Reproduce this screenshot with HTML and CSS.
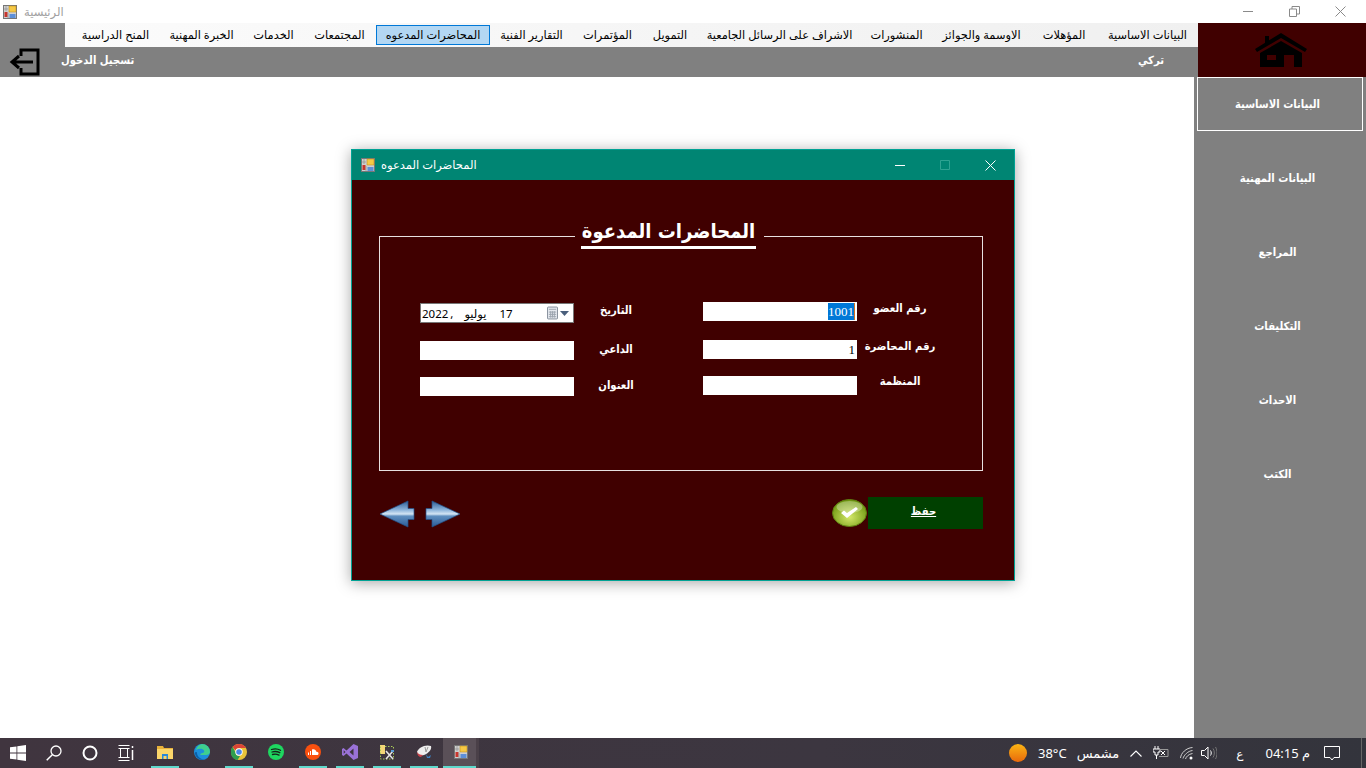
FILE: index.html
```html
<!DOCTYPE html>
<html lang="ar">
<head>
    <meta charset="UTF-8">
    <title>الرئيسية</title>
    <link rel="stylesheet" href="styles.css">
</head>
<body>
    <div class="titlebar">
        <svg class="app-icon" viewBox="0 0 14 14"><use href="#mdi-icon"/></svg>
        <span class="titlebar-text" dir="rtl">الرئيسية</span>
        <div class="window-controls">
            <svg width="11" height="11" viewBox="0 0 11 11"><path d="M0 5.500h10" stroke="#8a8a8a" fill="none"/></svg>
            <svg width="11" height="11" viewBox="0 0 11 11"><path d="M.5 3h7v7.500h-7zM3 3V.5h7.500V8H7.500" stroke="#8a8a8a" fill="none"/></svg>
            <svg width="11" height="11" viewBox="0 0 11 11"><path d="M.5.5l10 10M10.500.5l-10 10" stroke="#8a8a8a" fill="none"/></svg>
        </div>
    </div>

    <div class="top">
        <div class="top-left">
            <div class="menu-row">
                <nav class="menu" dir="rtl">
                    <a>البيانات الاساسية</a>
                    <a>المؤهلات</a>
                    <a>الاوسمة والجوائز</a>
                    <a>المنشورات</a>
                    <a>الاشراف على الرسائل الجامعية</a>
                    <a>التمويل</a>
                    <a>المؤتمرات</a>
                    <a>التقارير الفنية</a>
                    <a class="active">المحاضرات المدعوه</a>
                    <a>المجتمعات</a>
                    <a>الخدمات</a>
                    <a>الخبرة المهنية</a>
                    <a>المنح الدراسية</a>
                </nav>
            </div>
            <div class="band">
                <svg class="logout-icon" width="32" height="28" viewBox="0 0 32 28">
                    <path d="M12 8V2h17v24H12v-6" fill="none" stroke="#000" stroke-width="3"/>
                    <path d="M24 14H4M10 8l-7 6 7 6" fill="none" stroke="#000" stroke-width="3"/>
                </svg>
                <span class="band-text logout-text" dir="rtl">تسجيل الدخول</span>
                <span class="band-text user-text" dir="rtl">تركي</span>
            </div>
        </div>
        <div class="home">
            <svg width="52" height="34" viewBox="0 0 52 34">
                <path d="M10 3h4v5l-4 3z" fill="#000"/>
                <path d="M0 16L26 0l26 16-2 3L26 5 2 19z" fill="#000"/>
                <path d="M5 20L26 8l21 12v14h-8V22H29v12H5zM12 22v5h9v-5z" fill="#000" fill-rule="evenodd"/>
            </svg>
        </div>
    </div>

    <div class="main">
        <div class="content">
            <div class="dialog">
                <div class="dialog-title">
                    <svg class="dialog-icon" viewBox="0 0 14 14"><use href="#mdi-icon"/></svg>
                    <span class="dialog-title-text" dir="rtl">المحاضرات المدعوه</span>
                    <div class="dialog-controls">
                        <svg width="11" height="11" viewBox="0 0 11 11"><path d="M0 5.500h10" stroke="#fff" fill="none"/></svg>
                        <svg width="11" height="11" viewBox="0 0 11 11"><path d="M.5.5h9v9h-9z" stroke="#2ea392" fill="none"/></svg>
                        <svg width="11" height="11" viewBox="0 0 11 11"><path d="M.5.5l10 10M10.500.5l-10 10" stroke="#fff" fill="none"/></svg>
                    </div>
                </div>
                <div class="dialog-body">
                    <div class="frame">
                        <h1 class="legend" dir="rtl"><span>المحاضرات المدعوة</span></h1>
                        <div class="form">
                            <div class="form-col form-col-left">
                                <div class="field">
                                    <div class="datepicker">
                                        <span class="date-year">2022</span>
                                        <span class="date-comma">,</span>
                                        <span class="date-month">يوليو</span>
                                        <span class="date-day">17</span>
                                        <svg class="date-cal" width="11" height="14" viewBox="0 0 12 14">
                                            <rect x=".5" y=".5" width="11" height="13" rx="1" fill="#e4e8ee" stroke="#7d8794"/>
                                            <path d="M2 3h8M2 6h8M2 8.500h8M2 11h8M4 5v7M6 5v7M8 5v7" stroke="#9aa3ad" fill="none"/>
                                        </svg>
                                        <svg class="date-drop" width="9" height="5" viewBox="0 0 9 5"><path d="M0 0h9L4.500 5z" fill="#4a5f7c"/></svg>
                                    </div>
                                    <label class="field-label label-date" dir="rtl">التاريخ</label>
                                </div>
                                <div class="field">
                                    <input class="text-input" type="text">
                                    <label class="field-label label-host" dir="rtl">الداعي</label>
                                </div>
                                <div class="field">
                                    <input class="text-input" type="text">
                                    <label class="field-label label-host" dir="rtl">العنوان</label>
                                </div>
                            </div>
                            <div class="form-col form-col-right">
                                <div class="field">
                                    <div class="text-input"><span class="selected">1001</span></div>
                                    <label class="field-label label-member" dir="rtl">رقم العضو</label>
                                </div>
                                <div class="field">
                                    <div class="text-input">1</div>
                                    <label class="field-label label-member" dir="rtl">رقم المحاضرة</label>
                                </div>
                                <div class="field">
                                    <input class="text-input" type="text">
                                    <label class="field-label label-org" dir="rtl">المنظمة</label>
                                </div>
                            </div>
                        </div>
                    </div>
                    <div class="actions">
                        <div class="nav-arrows">
                            <svg width="36" height="28" viewBox="0 0 36 28"><use href="#arrow"/></svg>
                            <svg class="flip" width="36" height="28" viewBox="0 0 36 28"><use href="#arrow"/></svg>
                        </div>
                        <div class="save">
                            <svg width="35" height="28" viewBox="0 0 35 28">
                                <ellipse cx="17.500" cy="14" rx="17" ry="13.500" fill="url(#check-bg)" stroke="#5f7f12"/>
                                <ellipse cx="17.500" cy="8" rx="13" ry="6" fill="#fff" opacity=".3"/>
                                <path d="M9 14l6 5 11-9-2-2-9 6-3-2.500z" fill="#fff"/>
                            </svg>
                            <button class="save-btn" dir="rtl">حفظ</button>
                        </div>
                    </div>
                </div>
            </div>
        </div>
        <aside class="sidebar" dir="rtl">
            <a class="side-item side-active">البيانات الاساسية</a>
            <a class="side-item">البيانات المهنية</a>
            <a class="side-item">المراجع</a>
            <a class="side-item">التكليفات</a>
            <a class="side-item">الاحداث</a>
            <a class="side-item">الكتب</a>
        </aside>
    </div>

    <footer class="taskbar">
        <div class="task-left">
            <svg class="sys-icon" width="16" height="16" viewBox="0 0 16 16"><path d="M0 2.300l6.500-.9v6.200H0zM7.300 1.300L16 0v7.600H7.300zM0 8.400h6.500v6.200L0 13.700zM7.300 8.400H16V16l-8.700-1.300z" fill="#fff"/></svg>
            <svg class="sys-icon" width="16" height="16" viewBox="0 0 16 16"><circle cx="10" cy="6" r="5" fill="none" stroke="#fff" stroke-width="1.300"/><path d="M6.300 9.700L.7 15.300" stroke="#fff" stroke-width="1.500"/></svg>
            <svg class="sys-icon" width="16" height="16" viewBox="0 0 16 16"><circle cx="8" cy="8" r="6.500" fill="none" stroke="#fff" stroke-width="2"/></svg>
            <svg class="sys-icon" width="16" height="16" viewBox="0 0 16 16"><path d="M.5 3.500h11M.5 12.500h11M2.500 3.500v9h7v-9M.5.500h11M.5 15.500h11" fill="none" stroke="#fff"/><path d="M14.500 1v2M14.500 5v10" stroke="#fff" stroke-width="1.500"/></svg>
        </div>
        <div class="task-apps">
            <div class="task-app running">
                <svg width="16" height="16" viewBox="0 0 16 16"><path d="M0 2h6l1 2h9v11H0z" fill="#e8b13a"/><path d="M0 5h16v10H0z" fill="#fbd66a"/><path d="M5 10h6v5H9.500v-3h-3v3H5z" fill="#2b88d8"/></svg>
            </div>
            <div class="task-app">
                <svg width="16" height="16" viewBox="0 0 16 16"><circle cx="8" cy="8" r="8" fill="#1c8fdc"/><path d="M8 0a8 8 0 0 1 8 8c0 2-2 3-4 3H7c-1 0-1-1 0-1.500 2-.5 4-1 3-3S5 4 2 6a8 8 0 0 1 6-6z" fill="#3fcf8e"/><path d="M3 9c0 3 3 6 7 6.500C6 17 1 13 1 9c0-1 2-1.500 2 0z" fill="#0b5fa8"/></svg>
            </div>
            <div class="task-app running">
                <svg width="16" height="16" viewBox="0 0 16 16"><circle cx="8" cy="8" r="8" fill="#e8c33a"/><path d="M8 0a8 8 0 0 1 7 4H8a4 4 0 0 0-3.600 2.300L1.600 3A8 8 0 0 1 8 0z" fill="#dc4437"/><path d="M1.600 3l3 5.500A4 4 0 0 0 9 12l-2.500 4A8 8 0 0 1 1.600 3z" fill="#2f9e4f"/><circle cx="8" cy="8" r="3.700" fill="#fff"/><circle cx="8" cy="8" r="2.800" fill="#4a86e8"/></svg>
            </div>
            <div class="task-app">
                <svg width="16" height="16" viewBox="0 0 16 16"><circle cx="8" cy="8" r="8" fill="#1ed760"/><path d="M3.500 5.500c3-1 6.500-.7 9 .8M4 8c2.600-.8 5.500-.5 7.800.7M4.500 10.500c2.200-.6 4.500-.4 6.500.6" fill="none" stroke="#15251b" stroke-width="1.300" stroke-linecap="round"/></svg>
            </div>
            <div class="task-app running">
                <svg width="16" height="16" viewBox="0 0 16 16"><circle cx="8" cy="8" r="8" fill="#f9500f"/><path d="M3 11V8.500h1V11zM5 11V7h1v4zM7 11V5.500c2-.8 4 0 4.300 2.300 1.300-.3 2.200.6 2.200 1.600S12.800 11 12 11z" fill="#fff"/></svg>
            </div>
            <div class="task-app running">
                <svg width="16" height="16" viewBox="0 0 16 16"><path d="M11.500 0L16 2v12l-4.500 2L4.500 9.500 1.500 12 0 11V5l1.500-1 3 2.500zM11.500 4.500L7.500 8l4 3.500zM1.700 6.300v3.400L3.500 8z" fill="#9a72d8" fill-rule="evenodd"/></svg>
            </div>
            <div class="task-app running">
                <svg width="16" height="16" viewBox="0 0 16 16"><path d="M1 1h5v9H1z" fill="#f3d577"/><path d="M1.500 2.500V15h13V2.500H6" fill="none" stroke="#a7c957" stroke-dasharray="1.500 1.500"/><path d="M7 7l7 8M14 7l-7 8" stroke="#e7e7e7" stroke-width="1.500"/><path d="M12 6h3v2h-3z" fill="#5aa0d8"/></svg>
            </div>
            <div class="task-app running">
                <svg width="16" height="16" viewBox="0 0 16 16"><path d="M1 8C2 4 9 0 15 2c1 3-2 7-7 9-3 1-6 0-7-3z" fill="#eee"/><path d="M1 8c1 2 3 3 6 3L5 13C3 13 1 11 1 8z" fill="#c8424a"/><path d="M9 3l1 5M12 3l-2 5" stroke="#999"/><path d="M10 10l2 3 3-2-1 3h-3z" fill="#3b82c4"/></svg>
            </div>
            <div class="task-app task-current running">
                <svg width="14" height="14" viewBox="0 0 14 14"><use href="#mdi-icon"/></svg>
            </div>
            <span class="task-sliver"></span>
        </div>
        <div class="task-right">
            <span class="sun"></span>
            <span class="temp">38°C</span>
            <span class="weather" dir="rtl">مشمس</span>
            <svg class="tray-chevron" width="12" height="7" viewBox="0 0 12 7"><path d="M.5 6.500L6 1l5.500 5.500" fill="none" stroke="#fff" stroke-width="1.100"/></svg>
            <svg class="tray-battery" width="16" height="14" viewBox="0 0 16 14"><path d="M2 0v3M5 0v3M0 3h7v3H5v3H2V6H0zM3.500 9v4" fill="none" stroke="#fff"/><path d="M6 3.500h9v7H6" fill="none" stroke="#9a9a9a"/><path d="M8 5l4 4M12 5l-4 4" stroke="#fff"/></svg>
            <svg class="tray-wifi" width="13" height="13" viewBox="0 0 13 13"><path d="M.5 11C1 6 6 1 12.500.5M3 11.500C4 8 8 4 12.500 3.500M5.500 12c.5-2 3-5 7-5.500" fill="none" stroke="#cfcfcf"/><circle cx="11" cy="11" r="1.500" fill="#fff"/></svg>
            <svg class="tray-speaker" width="16" height="14" viewBox="0 0 16 14"><path d="M.5 4.500h3L7 1v12L3.500 9.500h-3z" fill="none" stroke="#fff"/><path d="M9.500 4.500c1 1.500 1 3.500 0 5" fill="none" stroke="#fff"/><path d="M12 2.500c1.800 2.500 1.800 6.500 0 9M14.500 1c2 3.500 2 8.500 0 12" fill="none" stroke="#777"/></svg>
            <span class="lang">ع</span>
            <span class="clock">04:15 م</span>
            <svg class="tray-notify" width="16" height="16" viewBox="0 0 16 16"><path d="M.5 1.500h15v11H10L8 15l-2-2.500H.5z" fill="none" stroke="#fff"/></svg>
            <span class="show-desktop"></span>
        </div>
    </footer>

    <svg class="defs" width="0" height="0">
        <defs>
            <linearGradient id="arrow-bg" x1="0" y1="0" x2="0" y2="1">
                <stop offset="0" stop-color="#2d5c94"/>
                <stop offset=".35" stop-color="#8fb6dc"/>
                <stop offset=".5" stop-color="#d5e5f4"/>
                <stop offset=".58" stop-color="#5f8fc0"/>
                <stop offset="1" stop-color="#2a5a96"/>
            </linearGradient>
            <radialGradient id="check-bg" cx=".5" cy=".65" r=".6">
                <stop offset="0" stop-color="#d4e86a"/>
                <stop offset="1" stop-color="#6f9810"/>
            </radialGradient>
            <symbol id="arrow" viewBox="0 0 36 28">
                <path d="M1 14L29 1v7.500h6v11h-6V27z" fill="url(#arrow-bg)" stroke="#23518a" stroke-width=".7"/>
            </symbol>
            <symbol id="mdi-icon" viewBox="0 0 14 14">
                <rect x=".5" y=".5" width="13" height="13" fill="#cfcfcf" stroke="#777"/>
                <rect x="6" y="1" width="7" height="6" fill="#f6c945" stroke="#b98614" stroke-width=".5"/>
                <rect x="1.500" y="7" width="3" height="5" fill="#c8352d"/>
                <rect x="6.500" y="9" width="6" height="4" fill="#5d8fd8"/>
                <path d="M1 4h4M3 1v5M5 8v5" stroke="#888" stroke-width=".6"/>
            </symbol>
        </defs>
    </svg>
</body>
</html>
```

FILE: styles.css
```css
* {
    box-sizing: border-box;
}

html,
body {
    height: 100%;
}

body {
    margin: 0;
    display: flex;
    flex-direction: column;
    height: 768px;
    overflow: hidden;
    background: #fff;
    font-family: "Noto Sans", "DejaVu Sans", sans-serif;
    font-size: 12px;
}

.defs {
    position: absolute;
}

.titlebar {
    height: 23px;
    display: flex;
    align-items: center;
    padding-left: 3px;
    background: #fff;
    font-size: 11.5px;
}

.app-icon {
    width: 14px;
    height: 14px;
}

.titlebar-text {
    margin-left: 7px;
    color: #a0a0a0;
}

.window-controls {
    margin-left: auto;
    display: flex;
    gap: 35px;
    padding-right: 20px;
}

.top {
    height: 54px;
    display: flex;
}

.top-left {
    flex: 1;
    display: flex;
    flex-direction: column;
}

.menu-row {
    height: 24px;
    padding-left: 65px;
    background: #808080;
}

.menu {
    height: 24px;
    display: grid;
    grid-template-columns: 101px 66px 99px 71px 163px 56px 69px 83px 114px 73px 59px 85px 87px 7px;
    align-items: center;
    background: linear-gradient(to left, #f0f0f0, #fbfbfb);
    color: #000;
    font-size: 11.4px;
}

.menu a {
    text-align: center;
    white-space: nowrap;
    line-height: 20px;
    height: 20px;
}

.menu .active {
    background: #b3d7f3;
    outline: 1px solid #0078d7;
    outline-offset: -1px;
}

.band {
    height: 30px;
    display: flex;
    align-items: center;
    background: #808080;
}

.logout-icon {
    margin-left: 9px;
}

.band-text,
.field-label,
.side-item,
.save-btn {
    font-family: "DejaVu Sans Condensed", "DejaVu Sans", sans-serif;
    font-size: 11.2px;
    font-weight: bold;
}

.band-text {
    color: #fff;
    padding-bottom: 4px;
}

.logout-text {
    margin-left: 20px;
}

.user-text {
    margin-left: auto;
    margin-right: 34px;
}

.home {
    width: 168px;
    display: flex;
    align-items: center;
    justify-content: center;
    padding-right: 3px;
    background: #400000;
}

.main {
    flex: 1;
    display: flex;
}

.content {
    flex: 1;
    position: relative;
}

.dialog {
    position: absolute;
    left: 351px;
    top: 72px;
    width: 664px;
    height: 432px;
    display: flex;
    flex-direction: column;
    border: 1px solid #00a294;
    background: #400000;
    box-shadow: 0 2px 14px rgba(0, 0, 0, 0.35);
}

.dialog-title {
    height: 30px;
    display: flex;
    align-items: center;
    padding-left: 9px;
    background: #008573;
    color: #fff;
    font-size: 11.5px;
}

.dialog-title-text {
    padding-bottom: 2px;
}

.dialog-icon {
    width: 14px;
    height: 14px;
    margin-right: 6px;
}

.dialog-controls {
    margin-left: auto;
    display: flex;
    gap: 34px;
    padding-right: 18px;
}

.dialog-body {
    flex: 1;
    padding: 56px 31px 0 27px;
}

.frame {
    position: relative;
    height: 235px;
    border: 1px solid #e8e0e0;
}

.legend {
    position: absolute;
    left: 195px;
    top: -19px;
    width: 189px;
    margin: 0;
    padding-right: 8px;
    background: #400000;
    color: #fff;
    font-family: "DejaVu Sans Condensed", "DejaVu Sans", sans-serif;
    font-size: 20px;
    font-weight: bold;
    line-height: 26px;
    text-align: right;
}

.legend span {
    display: inline-block;
    width: 175px;
    height: 31px;
    border-bottom: 3px solid #fff;
    text-align: center;
    white-space: nowrap;
}

.form {
    display: flex;
    padding-left: 40px;
    gap: 45px;
}

.form-col {
    display: flex;
    flex-direction: column;
}

.form-col-left {
    padding-top: 66px;
}

.form-col-right {
    padding-top: 65px;
}

.field {
    display: flex;
    align-items: flex-start;
    height: 36px;
}

.form-col > .field:first-child {
    height: 38px;
}

.text-input {
    width: 154px;
    height: 19px;
    padding: 1px 2px 0;
    border: 0;
    background: #fff;
    color: #000;
    font-family: "Liberation Serif", serif;
    font-size: 13px;
    line-height: 17px;
    text-align: right;
}

.selected {
    display: inline-block;
    background: #0078d7;
    color: #fff;
    border-right: 1px solid #d07020;
}

.datepicker {
    width: 154px;
    height: 20px;
    display: flex;
    align-items: center;
    border: 1px solid #777;
    background: #fff;
    color: #000;
    padding-left: 1px;
    font-size: 11.5px;
}

.date-comma {
    margin-left: 2px;
}

.date-month {
    margin-left: 11px;
}

.date-day {
    margin-left: 13px;
}

.date-cal {
    flex: none;
    margin-left: 34px;
}

.date-drop {
    flex: none;
    margin-left: 2px;
}

.field-label {
    color: #fff;
    text-align: center;
    white-space: nowrap;
    line-height: 16px;
}

.form-col-left .field-label {
    width: 84px;
}

.form-col-right .field-label {
    width: 86px;
}

.label-date {
    margin-top: 0;
}

.label-host {
    margin-top: 1px;
}

.label-member {
    margin-top: -1px;
}

.label-org {
    margin-top: -2px;
}

.actions {
    display: flex;
    justify-content: space-between;
    align-items: flex-start;
    padding-top: 26px;
}

.nav-arrows {
    display: flex;
    gap: 10px;
    padding-top: 3px;
}

.flip {
    transform: scaleX(-1);
}

.save {
    display: flex;
    align-items: center;
    gap: 1px;
}

.save-btn {
    width: 115px;
    height: 32px;
    border: 0;
    padding: 0 4px 3px 0;
    background: #004000;
    color: #fff;
    text-decoration: underline;
}

.sidebar {
    width: 172px;
    display: flex;
    flex-direction: column;
    gap: 20px;
    padding: 0 3px;
    background: #808080;
}

.side-item {
    height: 54px;
    display: flex;
    align-items: center;
    justify-content: center;
    padding-right: 5px;
    color: #fff;
    white-space: nowrap;
}

.side-active {
    border: 1px solid #fff;
}

.taskbar {
    height: 30px;
    display: flex;
    align-items: center;
    background: linear-gradient(to right, #40353f, #3c3640 60%, #33343c);
    color: #fff;
}

.task-left {
    display: flex;
    gap: 20px;
    padding-left: 10px;
    width: 151px;
}

.task-apps {
    flex: 1;
    display: flex;
    gap: 9px;
    height: 100%;
}

.task-app {
    width: 28px;
    height: 100%;
    display: flex;
    align-items: center;
    justify-content: center;
    padding-bottom: 1px;
    border-bottom: 2px solid transparent;
}

.task-app.running {
    border-bottom: 2px solid #5fd9cc;
}

.task-current {
    width: 33px;
    margin-left: -4px;
    padding-left: 3px;
    background: #5a5058;
}

.task-sliver {
    width: 3px;
    margin-left: -9px;
    background: #4a4048;
}

.task-right {
    width: 357px;
    display: flex;
    align-items: center;
    position: relative;
    height: 100%;
    font-size: 13px;
}

.sun {
    width: 18px;
    height: 18px;
    border-radius: 50%;
    background: linear-gradient(to bottom, #fbb514, #e8690c);
}

.temp {
    margin-left: 11px;
}

.weather {
    margin-left: 10px;
}

.tray-chevron {
    margin-left: 11px;
}

.tray-battery {
    margin-left: 11px;
}

.tray-wifi {
    margin-left: 11px;
}

.tray-speaker {
    margin-left: 8px;
}

.lang {
    margin-left: 19px;
    font-size: 12px;
}

.clock {
    margin-left: 22px;
    font-size: 13px;
}

.tray-notify {
    margin-left: 14px;
}

.show-desktop {
    position: absolute;
    right: 4px;
    top: 0;
    bottom: 0;
    width: 1px;
    background: #666;
}
```
